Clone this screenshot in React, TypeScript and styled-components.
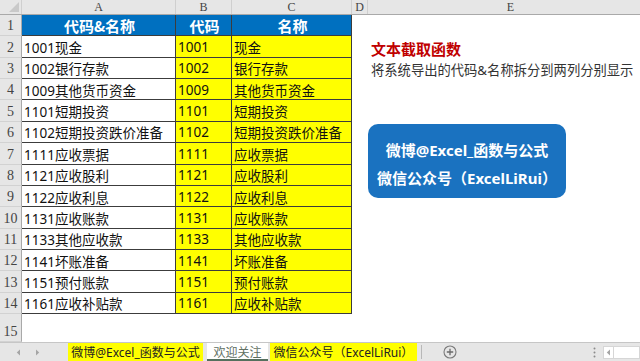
import React from "react";
import styled, { createGlobalStyle } from "styled-components";

const GlobalStyle = createGlobalStyle`
  html, body { margin: 0; padding: 0; background: #ffffff; }
  body { width: 640px; height: 361px; overflow: hidden; font-family: "Noto Sans", "Noto Sans CJK SC", sans-serif; }
  * { box-sizing: border-box; }
`;

const CJK = `"Noto Sans CJK SC", "Noto Sans", sans-serif`;
const MIX = `"Noto Sans", "Noto Sans CJK SC", sans-serif`;
const SERIF = `"Liberation Serif", "DejaVu Serif", serif`;
const COLS = "22px 154px 56px 120px 16px";
const ROW_H = 21.36;
const LINE = "#3c3c3c";

const Page = styled.div`
  width: 640px;
  height: 361px;
  display: flex;
  flex-direction: column;
  overflow: hidden;
`;

const Sheet = styled.div`
  height: 342px;
  display: flex;
  flex-direction: column;
  overflow: hidden;
`;

const HeaderRow = styled.div`
  display: grid;
  grid-template-columns: ${COLS} 286px;
  height: 15px;
  background: #e6e6e6;
  border-bottom: 1px solid #a9a9a9;
  flex: none;
`;

const Corner = styled.div`
  position: relative;
  border-right: 1px solid #cfcfcf;
  overflow: hidden;
  &::after {
    content: "";
    position: absolute;
    right: 2px;
    bottom: 2px;
    width: 0;
    height: 0;
    border-left: 10px solid transparent;
    border-bottom: 10px solid #c9c9c9;
  }
`;

const ColHead = styled.div`
  display: flex;
  align-items: center;
  justify-content: center;
  font-family: ${SERIF};
  font-size: 12px;
  color: #444;
  border-right: 1px solid #cfcfcf;
  line-height: 1;
`;

const Body = styled.div`
  display: flex;
  flex: 1;
  min-height: 0;
`;

const Table = styled.div`
  display: grid;
  grid-template-columns: ${COLS};
  grid-template-rows: repeat(14, ${ROW_H}px) 28px;
  flex: none;
`;

const RowNum = styled.div`
  background: #e6e6e6;
  border-right: 1px solid #a9a9a9;
  border-bottom: 1px solid #d2d2d2;
  display: flex;
  align-items: flex-end;
  justify-content: center;
  font-family: ${SERIF};
  font-size: 14px;
  line-height: 14px;
  padding-bottom: 2px;
  color: #444;
`;

const Cell = styled.div<{ $bg?: string; $head?: boolean; $center?: boolean; $line?: boolean }>`
  background: ${(p) => p.$bg ?? "#ffffff"};
  border-right: ${(p) => (p.$line ? `1px solid ${LINE}` : "none")};
  border-bottom: ${(p) => (p.$line ? `1px solid ${LINE}` : "none")};
  display: flex;
  align-items: center;
  justify-content: ${(p) => (p.$center ? "center" : "flex-start")};
  padding: 1px 0 0 2px;
  font-family: ${(p) => (p.$head ? CJK : MIX)};
  font-size: ${(p) => (p.$head ? "15px" : "13.5px")};
  font-weight: ${(p) => (p.$head ? 700 : 400)};
  color: ${(p) => (p.$head ? "#ffffff" : "#111111")};
  white-space: nowrap;
  overflow: hidden;
`;

const Side = styled.div`
  width: 286px;
  flex: none;
  display: flex;
  flex-direction: column;
  padding-top: 23px;
  background: #ffffff;
`;

const Title = styled.div`
  height: 21px;
  display: flex;
  align-items: center;
  padding-left: 3px;
  font-family: ${CJK};
  font-size: 15px;
  font-weight: 700;
  color: #c00000;
  white-space: nowrap;
`;

const Desc = styled.div`
  height: 21px;
  display: flex;
  align-items: center;
  padding-left: 3px;
  font-family: ${MIX};
  font-size: 13.3px;
  color: #333333;
  white-space: nowrap;
`;

const Card = styled.div`
  margin-top: 44px;
  width: 198px;
  height: 74px;
  border-radius: 10px;
  background: #1a72c0;
  display: flex;
  flex-direction: column;
  align-items: center;
  padding-top: 12px;
`;

const CardLine = styled.div`
  height: 28px;
  line-height: 28px;
  font-family: ${MIX};
  font-size: 15px;
  font-weight: 700;
  color: #ffffff;
  white-space: nowrap;
`;

const TabBar = styled.div`
  height: 19px;
  flex: none;
  display: flex;
  align-items: stretch;
  background: #e6e6e6;
  border-top: 1px solid #c6c6c6;
`;

const Nav = styled.div`
  width: 68px;
  display: flex;
  align-items: center;
  padding-left: 16px;
  gap: 14px;
`;

const Tab = styled.div<{ $w: number; $active?: boolean }>`
  width: ${(p) => p.$w}px;
  margin-right: ${(p) => (p.$active ? 2 : 4)}px;
  display: flex;
  align-items: center;
  justify-content: center;
  font-family: ${MIX};
  font-size: 12px;
  white-space: nowrap;
  color: ${(p) => (p.$active ? "#5f6f62" : "#222222")};
  background: ${(p) => (p.$active ? "#ffffff" : "#ffff00")};
  border-bottom: ${(p) => (p.$active ? "2px solid #55705e" : "none")};
  padding-top: ${(p) => (p.$active ? "2px" : "0")};
`;

const Sep = styled.div`
  width: 1px;
  margin: 2px 0;
  background: #b8b8b8;
`;

const AddWrap = styled.div`
  width: 56px;
  display: flex;
  align-items: center;
  justify-content: center;
`;

const Spacer = styled.div`
  flex: 1;
`;

const Dots = styled.div`
  width: 14px;
  display: flex;
  align-items: center;
  justify-content: center;
  margin-right: 2px;
`;

const Scroll = styled.div`
  width: 37px;
  display: flex;
  align-items: stretch;
  padding: 3px 0 2px;
`;

const ScrollBtn = styled.div`
  width: 11px;
  display: flex;
  align-items: center;
  justify-content: center;
  background: #ffffff;
  border: 1px solid #d6d6d6;
`;

const ScrollTrack = styled.div`
  flex: 1;
  background: #ffffff;
  border: 1px solid #d6d6d6;
  border-left: none;
`;

const Tri = ({ dir }: { dir: "l" | "r" }) => (
  <svg width="5" height="7" viewBox="0 0 5 7">
    {dir === "l" ? <path d="M4 0.5 L0.8 3.5 L4 6.5 Z" fill="#a5a5a5" /> : <path d="M1 0.5 L4.2 3.5 L1 6.5 Z" fill="#a5a5a5" />}
  </svg>
);

const rows: [string, string][] = [
  ["1001", "现金"],
  ["1002", "银行存款"],
  ["1009", "其他货币资金"],
  ["1101", "短期投资"],
  ["1102", "短期投资跌价准备"],
  ["1111", "应收票据"],
  ["1121", "应收股利"],
  ["1122", "应收利息"],
  ["1131", "应收账款"],
  ["1133", "其他应收款"],
  ["1141", "坏账准备"],
  ["1151", "预付账款"],
  ["1161", "应收补贴款"],
];

export default function App() {
  return (
    <>
      <GlobalStyle />
      <Page>
        <Sheet>
          <HeaderRow>
            <Corner />
            <ColHead>A</ColHead>
            <ColHead>B</ColHead>
            <ColHead>C</ColHead>
            <ColHead>D</ColHead>
            <ColHead>E</ColHead>
          </HeaderRow>
          <Body>
            <Table>
              <RowNum>1</RowNum>
              <Cell $bg="#0070c0" $head $center $line>代码&amp;名称</Cell>
              <Cell $bg="#0070c0" $head $center $line>代码</Cell>
              <Cell $bg="#0070c0" $head $center $line>名称</Cell>
              <Cell />
              {rows.map(([code, name], i) => (
                <React.Fragment key={code}>
                  <RowNum>{i + 2}</RowNum>
                  <Cell $line>{code + name}</Cell>
                  <Cell $bg="#ffff00" $line>{code}</Cell>
                  <Cell $bg="#ffff00" $line>{name}</Cell>
                  <Cell />
                </React.Fragment>
              ))}
              <RowNum>15</RowNum>
              <Cell />
              <Cell />
              <Cell />
              <Cell />
            </Table>
            <Side>
              <Title>文本截取函数</Title>
              <Desc>将系统导出的代码&amp;名称拆分到两列分别显示</Desc>
              <Card>
                <CardLine>微博@Excel_函数与公式</CardLine>
                <CardLine>微信公众号（ExcelLiRui）</CardLine>
              </Card>
            </Side>
          </Body>
        </Sheet>
        <TabBar>
          <Nav>
            <Tri dir="l" />
            <Tri dir="r" />
          </Nav>
          <Tab $w={135}>微博@Excel_函数与公式</Tab>
          <Tab $w={61} $active>欢迎关注</Tab>
          <Tab $w={147}>微信公众号（ExcelLiRui）</Tab>
          <Sep />
          <AddWrap>
            <svg width="14" height="14" viewBox="0 0 14 14">
              <circle cx="7" cy="7" r="6" fill="none" stroke="#7a7a7a" strokeWidth="1.1" />
              <path d="M7 3.8 V10.2 M3.8 7 H10.2" stroke="#6a6a6a" strokeWidth="1.3" />
            </svg>
          </AddWrap>
          <Spacer />
          <Dots>
            <svg width="3" height="11" viewBox="0 0 3 11">
              <circle cx="1.5" cy="1.5" r="1" fill="#8a8a8a" />
              <circle cx="1.5" cy="5.5" r="1" fill="#8a8a8a" />
              <circle cx="1.5" cy="9.5" r="1" fill="#8a8a8a" />
            </svg>
          </Dots>
          <Scroll>
            <ScrollBtn>
              <Tri dir="l" />
            </ScrollBtn>
            <ScrollTrack />
          </Scroll>
        </TabBar>
      </Page>
    </>
  );
}
